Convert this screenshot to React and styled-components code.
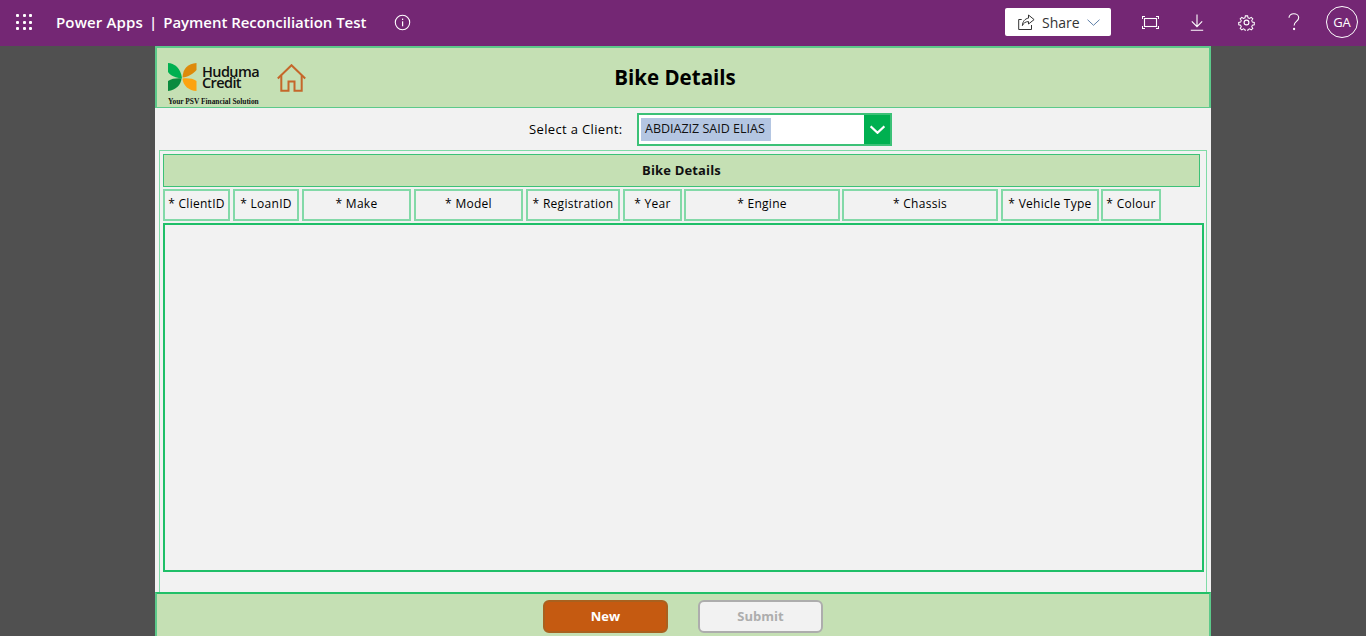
import React from "react";
import styled, { createGlobalStyle } from "styled-components";

const Global = createGlobalStyle`
  html, body { margin: 0; padding: 0; height: 100%; overflow: hidden; background: #505050; }
  #root { height: 636px; }
  * { box-sizing: border-box; }
`;

const Page = styled.div`
  width: 1366px; height: 636px; display: flex; flex-direction: column;
  background: #505050; overflow: hidden;
  font-family: "Open Sans", "Noto Sans", sans-serif; color: #111;
`;
const TopBar = styled.header`
  height: 46px; flex: none; background: #742774; color: #fff; padding-bottom: 2px;
  display: flex; align-items: center;
`;
const Waffle = styled.button`
  width: 16px; height: 16px; margin-left: 16px; padding: 0; border: 0; background: none;
  display: grid; grid-template-columns: repeat(3, 3px); grid-auto-rows: 3px; gap: 3.5px;
  span { background: #fff; display: block; border-radius: 1px; }
`;
const AppName = styled.div`
  margin-left: 24px; width: 338px; font-size: 15px; font-weight: 600;
  white-space: nowrap; display: flex; gap: 6px;
`;
const NameChunk = styled.span`
  letter-spacing: ${p => p.$sp}px;
`;
const IconBtn = styled.span`
  display: flex; align-items: center; justify-content: center; flex: none;
  width: ${p => p.$w || 20}px; height: 20px; margin-left: ${p => p.$ml || 0}px;
`;
const Share = styled.button`
  margin-left: auto; width: 106px; height: 28px; border: 0; border-radius: 2px; background: #fff;
  display: flex; align-items: center; padding: 0 0 0 13px; color: #333;
  font: 400 14px "Open Sans", sans-serif;
  span { margin: 0 7px 0 7px; }
`;
const Avatar = styled.div`
  width: 32px; height: 32px; border-radius: 50%; border: 1px solid #fff; margin: 0 8px 0 22px;
  display: flex; align-items: center; justify-content: center; font-size: 13px; font-weight: 500; flex: none;
`;
const Canvas = styled.main`
  width: 1056px; height: 590px; margin-left: 155px; background: #f2f2f2;
  display: flex; flex-direction: column;
`;
const Header = styled.div`
  height: 62px; flex: none; background: #c5e0b4;
  border: 2px solid #5cc98a; border-bottom-width: 1px;
  display: grid; grid-template-columns: 1fr; align-items: center; position: relative;
`;
const Brand = styled.div`
  position: absolute; left: 11px; top: 15px; display: flex; align-items: flex-start;
`;
const LogoText = styled.div`
  display: flex; flex-direction: column; margin-left: 5px; margin-top: 4px;
  font-size: 14.5px; line-height: 10.5px; font-weight: 600; letter-spacing: -0.6px; color: #111;
`;
const Tagline = styled.div`
  position: absolute; left: 0; top: 34px; width: 110px; white-space: nowrap;
  font: 700 7.4px "Liberation Serif", serif; color: #111;
`;
const HomeWrap = styled.div`
  position: absolute; left: 120px; top: 16px; line-height: 0;
`;
const PageTitle = styled.h1`
  margin: 0; text-align: center; font-size: 20.5px; font-weight: 700; line-height: 27px; color: #000;
  padding-right: 16px;
`;
const SelectRow = styled.div`
  height: 42px; flex: none; display: flex; align-items: center; padding-left: 374px;
`;
const SelectLabel = styled.div`
  width: 108px; font-size: 13px; font-weight: 500; letter-spacing: 0.35px; white-space: nowrap; color: #000;
`;
const Combo = styled.div`
  width: 255px; height: 33px; border: 2px solid #3cc177; background: #fff;
  display: flex; align-items: stretch;
`;
const ComboValue = styled.div`
  flex: 1; display: flex; align-items: center; padding-left: 2px;
  span {
    background: #b4c6e2; height: 23px; line-height: 21px; padding: 0 1px 0 4px; width: 130px;
    font-size: 12.5px; font-weight: 400; white-space: nowrap; letter-spacing: 0;
  }
`;
const ComboArrow = styled.div`
  width: 26px; background: #00b050; display: flex; align-items: center; justify-content: center;
`;
const Panel = styled.section`
  height: 442px; flex: none; margin: 0 4px; border: 1px solid #7fdba6; border-bottom: 0;
  padding: 3px 3px 0 3px; display: flex; flex-direction: column;
`;
const PanelTitle = styled.div`
  width: 1037px; height: 33px; flex: none; background: #c5e0b4; border: 1px solid #3cc177;
  padding-bottom: 1px;
  display: flex; align-items: center; justify-content: center;
  font-size: 13px; font-weight: 700; letter-spacing: 0.15px;
`;
const Columns = styled.div`
  display: flex; margin-top: 2px; height: 32px; flex: none;
`;
const Column = styled.div`
  width: ${p => p.$w}px; margin-right: ${p => p.$gap}px; flex: none; border: 2px solid #83d9a8;
  padding-bottom: 3px;
  display: flex; align-items: center; justify-content: center;
  font-size: 12px; font-weight: 500; letter-spacing: 0.28px; white-space: nowrap; color: #000;
`;
const Gallery = styled.div`
  width: 1041px; height: 349px; flex: none; margin-top: 2px; border: 2px solid #1fbf68;
`;
const Footer = styled.footer`
  flex: 1; background: #c5e0b4; border-top: 2px solid #22c068;
  border-left: 2px solid #5cc98a; border-right: 2px solid #5cc98a;
  display: flex; align-items: flex-start; justify-content: center; padding: 6px 0 0 0; gap: 30px;
`;
const Button = styled.button`
  width: ${p => p.$w}px; height: 33px; border-radius: 6px; padding: 0 0 2px;
  font: 700 13px "Open Sans", sans-serif;
  border: 2px solid ${p => (p.$primary ? "#a9611f" : "#adadad")};
  background: ${p => (p.$primary ? "#c55a11" : "#f2f2f2")};
  color: ${p => (p.$primary ? "#fff" : "#adadad")};
`;

const stroke = { fill: "none", stroke: "#fff", strokeWidth: 1.1 };

const InfoIcon = () => (
  <svg width="17" height="17" viewBox="0 0 17 17">
    <circle cx="8.5" cy="8.5" r="7.2" {...stroke} />
    <rect x="8" y="7.3" width="1.2" height="5" fill="#fff" />
    <rect x="8" y="4.6" width="1.2" height="1.4" fill="#fff" />
  </svg>
);
const ShareIcon = () => (
  <svg width="17" height="16" viewBox="0 0 17 16" fill="none" stroke="#333" strokeWidth="1">
    <path d="M4.5 15.5H.7V5.5h3M3 15.5h10.5V11" />
    <path d="M10.5 1l5.6 4.6-5.6 4.4V7.6C7.5 7.6 5.5 9 4.4 11.6 4.6 7.5 7 4.6 10.5 4.1z" />
  </svg>
);
const Chevron = ({ color = "#5e7fa8", w = 13, h = 7, sw = 1 }) => (
  <svg width={w} height={h} viewBox="0 0 13 7" fill="none" stroke={color} strokeWidth={sw}>
    <path d="M.5.7l6 5.6 6-5.6" />
  </svg>
);
const FitIcon = () => (
  <svg width="17" height="13" viewBox="0 0 17 13" {...stroke}>
    <rect x="2.5" y="2.5" width="12" height="8" />
    <path d="M.5 3V.5H3M14 .5h2.5V3M.5 10v2.5H3M14 12.5h2.5V10" />
  </svg>
);
const DownloadIcon = () => (
  <svg width="14" height="17" viewBox="0 0 14 17" {...stroke}>
    <path d="M7 .5v12M1.8 7.4L7 12.6l5.2-5.2M.8 16.2h12.4" />
  </svg>
);
const GearIcon = () => (
  <svg width="17" height="17" viewBox="0 0 24 24" fill="none" stroke="#fff" strokeWidth="1.6">
    <circle cx="12" cy="12" r="3.4" />
    <path d="M10.2 1.6h3.6l.6 3 2.4 1 2.6-1.7 2.5 2.5-1.7 2.6 1 2.4 3 .6v3.6l-3 .6-1 2.4 1.7 2.6-2.5 2.5-2.6-1.7-2.4 1-.6 3h-3.6l-.6-3-2.4-1-2.6 1.7-2.5-2.5 1.7-2.6-1-2.4-3-.6v-3.6l3-.6 1-2.4-1.7-2.6 2.5-2.5 2.6 1.7 2.4-1z" transform="translate(12 12) scale(.9) translate(-12 -12)" />
  </svg>
);
const HelpIcon = () => (
  <svg width="12" height="18" viewBox="0 0 12 18" {...stroke}>
    <path d="M1 4.8C1 2.4 3 .8 5.8.8c2.8 0 4.9 1.7 4.9 4 0 3.6-4.6 3.7-4.6 7.6" />
    <circle cx="6.1" cy="16" r=".6" fill="#fff" />
  </svg>
);
const LogoMark = () => (
  <svg width="29" height="29" viewBox="0 0 29 29">
    <path d="M0 0C6 0 13 5 14 15.5 8 15 3 13 0 9z" fill="#00b050" />
    <path d="M0 28V18C4 15.5 9 15 13.5 15.5 13 22 8 27 0 28z" fill="#0b8a3e" />
    <path d="M28.5 0C20 1 15 5 14.5 14.5 20 14 25 11 28.5 7z" fill="#dd8a0b" />
    <path d="M14.5 15.5C20 15 25 15.5 28.5 18V28C21 27.5 15 23 14.5 15.5z" fill="#fca311" />
  </svg>
);
const HomeIcon = () => (
  <svg width="29" height="28" viewBox="0 0 29 28" fill="none" stroke="#c5672a" strokeWidth="2">
    <path d="M.8 14.5L14.5 1.2 28.2 14.5" />
    <path d="M4.3 11.5v15.3h7.2v-9.300h6v9.300h7.200V11.500" />
  </svg>
);

const columns = [
  ["* ClientID", 67, 3], ["* LoanID", 66, 3], ["* Make", 109, 3], ["* Model", 109, 3],
  ["* Registration", 94, 3], ["* Year", 59, 2], ["* Engine", 156, 2], ["* Chassis", 156, 3],
  ["* Vehicle Type", 98, 2], ["* Colour", 60, 0],
];

export default function App() {
  return (
    <Page>
      <Global />
      <TopBar>
        <Waffle aria-label="Apps">
          {Array.from({ length: 9 }).map((_, i) => <span key={i} />)}
        </Waffle>
        <AppName>
          <NameChunk $sp={0.15}>Power Apps</NameChunk>
          <span>|</span>
          <NameChunk $sp={-0.05}>Payment Reconciliation Test</NameChunk>
        </AppName>
        <IconBtn $w={17}><InfoIcon /></IconBtn>
        <Share><ShareIcon /><span>Share</span><Chevron /></Share>
        <IconBtn $ml={29}><FitIcon /></IconBtn>
        <IconBtn $ml={27}><DownloadIcon /></IconBtn>
        <IconBtn $ml={29}><GearIcon /></IconBtn>
        <IconBtn $ml={28}><HelpIcon /></IconBtn>
        <Avatar>GA</Avatar>
      </TopBar>
      <Canvas>
        <Header>
          <Brand>
            <LogoMark />
            <LogoText><span>Huduma</span><span>Credit</span></LogoText>
            <Tagline>Your PSV Financial Solution</Tagline>
          </Brand>
          <PageTitle>Bike Details</PageTitle>
          <HomeWrap><HomeIcon /></HomeWrap>
        </Header>
        <SelectRow>
          <SelectLabel>Select a Client:</SelectLabel>
          <Combo>
            <ComboValue><span>ABDIAZIZ SAID ELIAS</span></ComboValue>
            <ComboArrow><Chevron color="#fff" w={15} h={9} sw={2} /></ComboArrow>
          </Combo>
        </SelectRow>
        <Panel>
          <PanelTitle>Bike Details</PanelTitle>
          <Columns>
            {columns.map(([t, w, g]) => <Column key={t} $w={w} $gap={g}>{t}</Column>)}
          </Columns>
          <Gallery />
        </Panel>
        <Footer>
          <Button $primary $w={125}>New</Button>
          <Button $w={125}>Submit</Button>
        </Footer>
      </Canvas>
    </Page>
  );
}
